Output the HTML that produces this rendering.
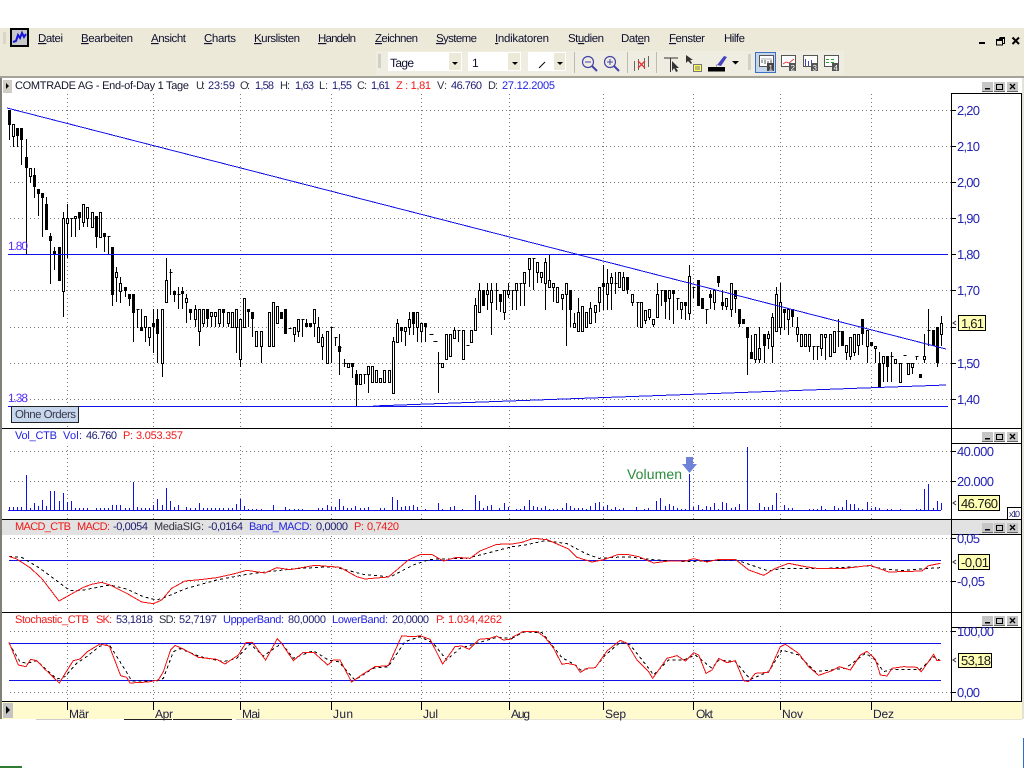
<!DOCTYPE html>
<html><head><meta charset="utf-8"><title>Chart</title>
<style>
html,body{margin:0;padding:0;background:#fff;width:1024px;height:768px;overflow:hidden}
svg{display:block}
text{font-family:"Liberation Sans",Arial,sans-serif;font-size:11px;text-rendering:geometricPrecision}
.m text{font-size:11.5px;fill:#101030}
.ax text{font-size:13px;fill:#2424b4}
.bx{fill:#ffffb4;stroke:#000}
.bt{font-size:13px;fill:#1a1a1a}
.n{fill:#1c1c70}.r{fill:#f01818}.b{fill:#2222e0}.d{fill:#303040}
.g line{stroke:#777;stroke-dasharray:1 3}
.e{shape-rendering:crispEdges}
.tl text{font-size:12px;fill:#202040}
</style></head><body>
<svg width="1024" height="768" viewBox="0 0 1024 768" xmlns="http://www.w3.org/2000/svg">
<rect width="1024" height="768" fill="#fff"/>
<rect y="28" width="1024" height="49" fill="#ece9d8"/>
<rect x="376" y="51" width="468" height="24" fill="#efede1"/>
<rect y="76" width="1024" height="2" fill="#a5a398"/>
<rect x="0" y="78" width="2" height="641" fill="#808078"/>
<rect x="1022" y="78" width="2" height="641" fill="#e4e2d8"/>
<!-- grip -->
<path d="M3 33h3M3 35h3M3 37h3M3 39h3M3 41h3M3 43h3" stroke="#c4c2b4" class="e"/>
<!-- app icon -->
<rect x="10" y="28" width="19" height="19" fill="#000"/>
<rect x="12" y="30" width="15" height="15" fill="#c8c8c8"/>
<path d="M13 42l3-1 2-6 2 3 2-5 2 4 2-3" fill="none" stroke="#1414e0" stroke-width="2"/>
<!-- menu -->
<g class="m">
<text x="38" y="42" textLength="25"><tspan text-decoration="underline">D</tspan>atei</text>
<text x="81" y="42" textLength="52"><tspan text-decoration="underline">B</tspan>earbeiten</text>
<text x="151" y="42" textLength="35"><tspan text-decoration="underline">A</tspan>nsicht</text>
<text x="204" y="42" textLength="32"><tspan text-decoration="underline">C</tspan>harts</text>
<text x="254" y="42" textLength="46"><tspan text-decoration="underline">K</tspan>urslisten</text>
<text x="318" y="42" textLength="38"><tspan text-decoration="underline">H</tspan>andeln</text>
<text x="375" y="42" textLength="43"><tspan text-decoration="underline">Z</tspan>eichnen</text>
<text x="436" y="42" textLength="41"><tspan text-decoration="underline">S</tspan>ysteme</text>
<text x="495" y="42" textLength="54"><tspan text-decoration="underline">I</tspan>ndikatoren</text>
<text x="568" y="42" textLength="36">St<tspan text-decoration="underline">u</tspan>dien</text>
<text x="621" y="42" textLength="29">Dat<tspan text-decoration="underline">e</tspan>n</text>
<text x="669" y="42" textLength="36"><tspan text-decoration="underline">F</tspan>enster</text>
<text x="724" y="42" textLength="21">Hilfe</text>
</g>
<!-- window buttons -->
<rect x="979" y="42" width="6" height="2" fill="#000" class="e"/>
<g class="e" fill="none" stroke="#000">
<path d="M999.500 37.500h5v6h-2"/><path d="M999 38.500h6" />
<rect x="996.500" y="39.500" width="6" height="5.500"/><path d="M996 40.500h7"/>
</g>
<path d="M1012.500 37.500l6.500 6.500M1019 37.500l-6.500 6.500" stroke="#000" stroke-width="2"/>
<!-- toolbar -->
<path d="M378 55h3M378 57h3M378 59h3M378 61h3M378 63h3M378 65h3M378 67h3" stroke="#b5b3a5" class="e"/>
<rect x="388" y="52" width="74" height="19" fill="#fff"/>
<rect x="449" y="53" width="12" height="17" fill="#ece9d8"/>
<path d="M452 62h6l-3 3z"/>
<text x="390" y="67" textLength="24" style="font-size:12px" fill="#101030">Tage</text>
<rect x="468" y="52" width="53" height="19" fill="#fff"/>
<rect x="508" y="53" width="12" height="17" fill="#ece9d8"/>
<path d="M512 62h6l-3 3z"/>
<text x="472" y="67" style="font-size:12px" fill="#101030">1</text>
<rect x="528" y="52" width="38" height="19" fill="#fff"/>
<rect x="554" y="53" width="11" height="17" fill="#ece9d8"/>
<path d="M557 62h6l-3 3z"/>
<path d="M539 68l6-6" stroke="#000"/>
<path d="M574.500 52v21M627.500 52v21M656.500 52v21" stroke="#bdbbae" class="e"/>
<circle cx="588" cy="62" r="5.500" fill="#efede1" stroke="#4444a8" stroke-width="1.200"/>
<path d="M592 66l5 5" stroke="#4444a8" stroke-width="2"/><path d="M585 62h6" stroke="#4444a8"/>
<circle cx="610" cy="62" r="5.500" fill="#efede1" stroke="#4444a8" stroke-width="1.200"/>
<path d="M614 66l5 5" stroke="#4444a8" stroke-width="2"/><path d="M607 62h6M610 59v6" stroke="#4444a8"/>
<path d="M634.500 61v10M638.500 59v11M644.500 58v11M648.500 56v11" stroke="#666" class="e"/>
<path d="M638 61l7 7M645 61l-7 7" stroke="#e83030" stroke-width="1.300"/>
<path d="M664 58h14M670.500 58v14" stroke="#333" class="e"/>
<path d="M672 61v10l2-3 2 4 2-1-2-3h3z" fill="#333"/>
<path d="M686 55v8l2-2 3 3 1-1-2-3h3z" fill="#333"/>
<rect x="693.500" y="64.500" width="8" height="7" fill="#ffff60" stroke="#777"/>
<path d="M695 67h5M695 69h5" stroke="#777" class="e"/>
<rect x="708" y="67" width="17" height="4.500" fill="#000"/>
<path d="M717 65l7-9 3 1-6 9z" fill="#4444c0"/><path d="M717 66l-1 1 1-3" fill="#333"/>
<path d="M732 61h7l-3.500 3.500z"/>
<path d="M748 55h3M748 57h3M748 59h3M748 61h3M748 63h3M748 65h3M748 67h3M748 69h3" stroke="#b5b3a5" class="e"/>
<rect x="755.500" y="52.500" width="20" height="20" fill="#c5d6ec" stroke="#3a6fc0"/>
<g>
<rect x="759.500" y="55.500" width="14" height="11" fill="#fff" stroke="#555" class="e"/><path d="M761 59h11" stroke="#aaa" class="e"/><path d="M762 60v3M765 60v4M768 61v3M771 60v3" stroke="#555"/><rect x="767" y="63" width="7" height="8" fill="#444"/><text x="768.500" y="70.500" style="font-size:8px" fill="#fff">1</text>
<rect x="781.500" y="55.500" width="14" height="11" fill="#fff" stroke="#555" class="e"/><path d="M783 64l3-2 3 1 5-4" fill="none" stroke="#e04040"/><rect x="789" y="63" width="7" height="8" fill="#555"/><text x="790.500" y="70.500" style="font-size:8px" fill="#fff">2</text>
<rect x="803.500" y="55.500" width="14" height="11" fill="#fff" stroke="#555" class="e"/><path d="M805.500 59v7M808.500 61v5M811.500 60v6" stroke="#4444b0" class="e"/><rect x="811" y="63" width="7" height="8" fill="#555"/><text x="812.500" y="70.500" style="font-size:8px" fill="#fff">3</text>
<rect x="824.500" y="55.500" width="14" height="11" fill="#fff" stroke="#555" class="e"/><path d="M826 59.500h3M831 59.500h3M826 62.500h3M831 62.500h3" stroke="#30a030" class="e"/><rect x="832" y="63" width="7" height="8" fill="#555"/><text x="833.500" y="70.500" style="font-size:8px" fill="#fff">4</text>
</g>

<!-- bands -->
<rect x="2" y="520" width="1020" height="15" fill="#e2e2e2"/>
<rect x="2" y="702" width="1020" height="17" fill="#fffbcf"/>
<path d="M36 719.500h34M236 719.500h17" stroke="#ccc" class="e"/>
<path d="M124 719.500h48M173 719.500h59" stroke="#222" class="e"/>
<rect y="719" x="254" width="768" height="1" fill="#e8e6da"/>

<!-- grids -->
<g class="g e">
<line x1="10" x2="951" y1="110.500" y2="110.500"/><line x1="10" x2="951" y1="146.500" y2="146.500"/><line x1="10" x2="951" y1="182.500" y2="182.500"/><line x1="10" x2="951" y1="218.500" y2="218.500"/><line x1="10" x2="951" y1="290.500" y2="290.500"/><line x1="10" x2="951" y1="327.500" y2="327.500"/><line x1="10" x2="951" y1="363.500" y2="363.500"/><line x1="10" x2="951" y1="399.500" y2="399.500"/>
<line x1="10" x2="951" y1="451.500" y2="451.500"/><line x1="10" x2="951" y1="481.500" y2="481.500"/>
<line x1="10" x2="951" y1="538.500" y2="538.500"/><line x1="10" x2="951" y1="581.500" y2="581.500"/>
<line x1="10" x2="951" y1="631.500" y2="631.500"/><line x1="10" x2="951" y1="692.500" y2="692.500"/>
</g>
<g class="e" fill="none" stroke="#777" stroke-dasharray="1 3">
<path d="M67.500 94V428M153.500 94V428M240.500 94V428M331.500 94V428M421.500 94V428M509.500 94V428M603.500 94V428M693.500 94V428M780.500 94V428M871.500 94V428"/>
<path d="M67.500 446V519M153.500 446V519M240.500 446V519M331.500 446V519M421.500 446V519M509.500 446V519M603.500 446V519M693.500 446V519M780.500 446V519M871.500 446V519"/>
<path d="M67.500 536V612M153.500 536V612M240.500 536V612M331.500 536V612M421.500 536V612M509.500 536V612M603.500 536V612M693.500 536V612M780.500 536V612M871.500 536V612"/>
<path d="M67.500 626V701M153.500 626V701M240.500 626V701M331.500 626V701M421.500 626V701M509.500 626V701M603.500 626V701M693.500 626V701M780.500 626V701M871.500 626V701"/>
</g>

<!-- candles -->
<g class="e" transform="translate(.5 0)">
<path fill="none" stroke="#000" d="M9 110V140M13 124V147M17 128V147M21 128V165M26 139V254M30 168V183M34 168V198M38 189V216M42 193V237M46 197V230M50 233V284M54 247V270M59 247V281M63 212V317M67 204V258M71 218V237M75 216V237M79 212V230M83 204V227M87 207V227M92 212V227M96 216V248M100 212V237M104 233V252M108 236V254M112 247V306M116 267V302M120 277V303M125 287V297M129 294V306M133 294V342M137 309V328M141 309V331M145 316V342M149 327V346M153 309V353M157 309V363M162 309V377M166 258V302M170 269V295M174 291V302M178 287V309M182 287V309M186 294V323M190 309V320M195 305V327M199 309V346M203 309V327M207 309V327M211 312V327M215 312V327M219 309V327M223 309V327M228 312V327M232 312V327M236 309V353M240 319V367M244 298V327M248 309V327M252 312V337M256 331V346M261 331V363M269 312V346M273 302V346M277 306V323M281 312V319M285 309V334M294 327V342M298 319V337M302 319V337M306 319V327M310 323V327M314 309V337M318 317V342M322 334V360M327 331V363M331 327V363M335 337V346M339 334V375
M344 359V367M348 363V367M352 363V378M356 370V407M360 374V384M364 374V384M368 366V393M372 366V382M376 370V382M380 378V382M384 370V382M389 370V382M393 337V393M397 319V342M401 327V342M405 327V346M409 312V335M413 312V335M417 312V342M421 323V342M425 323V342M438 352V393M442 363V367M446 334V359M450 334V356M454 327V338M458 330V342M463 330V359M471 330V342M475 298V330M479 283V312M483 290V306M487 283V310M491 283V335M496 283V310M500 294V312M504 290V320M508 283V298M512 290V310M516 283V310M520 283V306M524 272V306M529 258V287M533 258V290M537 262V283M541 272V283M545 258V310M549 254V287M553 283V302M557 287V302M562 294V310M566 283V346M570 290V327M574 313V327M578 298V331M582 306V331M586 312V327M590 302V323M595 305V323M599 287V312M603 265V310M607 269V310M611 273V310M615 272V294M619 272V287M623 272V290M627 277V294M632 294V306M637 302V327
M641 302V327M645 310V324M649 309V320M653 319V327M657 283V317M661 290V306M665 290V319M669 290V320M673 290V324M677 298V310M681 302V319M685 302V320M689 265V320M693 287V298M698 280V306M702 298V309M706 309V324M710 290V309M714 290V310M718 276V287M722 290V310M726 298V310M731 283V317M735 290V313M739 309V327M743 319V324M747 327V375M751 335V359M755 334V363M759 327V363M764 334V363M768 331V349M772 313V363M776 287V331M780 283V335M784 309V330M788 309V335M792 309V327M797 317V342M801 334V346M805 334V346M809 334V352M813 346V360M817 346V360M821 334V356M825 334V360M830 334V356M834 331V352M838 319V347M842 331V346M846 345V360M850 337V360M854 334V356M858 334V355M862 319V345M867 330V363M871 342V346M875 346V363M879 352V388M883 356V382M887 356V382M891 352V382M895 359V363M900 363V382M908 363V374M912 363V374M916 356V360M920 374V378M924 334V363M928 309V346M933 330V346M937 327V367M941 316V346"/>
<path fill="none" stroke="#000" d="M70 218.500h3M107 236.500h3M136 309.500h3M169 272.500h3M177 294.500h3M288 328.500h3M301 319.500h3M330 327.500h3M334 337.500h3M339 347.500h2M343 363.500h3M363 374.500h3M429 334.500h4M433 341.500h4M437 363.500h3M457 330.500h3M466 345.500h3M495 290.500h3M511 290.500h3M519 283.500h3M532 258.500h3M614 283.500h3M636 302.500h3M660 290.500h3M676 298.500h3M692 287.500h3M705 309.500h3M812 346.500h3M816 346.500h3M837 331.500h3M890 356.500h3M903 355.500h3M915 356.500h3M927 330.500h3"/>
<path fill="none" stroke="#000" stroke-width="3" d="M9 110V125M17 128V136M21 128V140M26 157V168M34 175V187M38 189V194M42 193V198M46 204V230M50 236V241M54 251V255M59 247V281M79 212V218M96 216V237M104 233V237M112 247V295M125 287V291M129 294V299M133 294V313M141 327V331M153 323V327M157 319V334M174 291V295M182 291V294M190 309V313M207 309V319M223 309V313M248 309V312M252 312V319M281 312V319M285 309V334M306 323V327M310 323V327M339 346V352M352 363V367M356 374V385M401 327V331M413 312V324M425 323V327M483 290V306M500 294V302M570 290V310M603 283V287M627 277V290M665 290V302M673 290V294M685 302V306M698 280V306M702 298V309M710 294V298M718 276V283M722 302V306M735 290V298M739 309V324M743 319V324M747 327V338M751 352V359M764 334V346M784 309V313M792 309V317M842 331V346M862 319V334M871 342V346M879 363V388M887 356V367M920 374V378M933 330V346M937 327V363"/>
</g>
<g class="e" transform="translate(.5 .5)" fill="#fff" stroke="#000">
<path d="M12 124h2V136h-2zM29 168h2V176h-2zM62 218h2V291h-2zM66 218h2V223h-2zM74 216h2V218h-2zM82 204h2V222h-2zM86 207h2V218h-2zM91 212h2V227h-2zM99 212h2V237h-2zM115 272h2V277h-2zM119 283h2V291h-2zM144 316h2V327h-2zM148 327h2V337h-2zM161 309h2V363h-2zM165 280h2V302h-2zM185 298h2V302h-2zM194 309h2V319h-2zM198 309h2V331h-2zM202 309h2V323h-2zM210 312h2V316h-2zM214 312h2V316h-2zM218 309h2V323h-2zM227 312h2V323h-2zM231 312h2V327h-2zM235 309h2V327h-2zM239 319h2V359h-2zM243 298h2V327h-2zM255 331h2V346h-2zM260 331h2V346h-2zM268 312h2V346h-2zM272 302h2V346h-2zM276 306h2V323h-2zM293 327h2V334h-2zM297 319h2V331h-2zM313 309h2V323h-2zM317 327h2V342h-2zM321 337h2V346h-2zM326 331h2V363h-2z"/>
<path d="M347 363h2V367h-2zM359 374h2V384h-2zM367 366h2V374h-2zM371 366h2V382h-2zM375 370h2V382h-2zM379 378h2V382h-2zM383 370h2V382h-2zM388 370h2V382h-2zM392 341h2V393h-2zM396 323h2V342h-2zM404 327h2V331h-2zM408 319h2V327h-2zM416 312h2V327h-2zM420 323h2V331h-2zM441 363h2V367h-2zM445 334h2V359h-2zM449 334h2V356h-2zM453 330h2V338h-2zM462 330h2V359h-2zM470 330h2V342h-2zM474 305h2V330h-2zM478 290h2V312h-2zM486 290h2V294h-2zM490 290h2V302h-2zM503 290h2V312h-2zM507 290h2V294h-2zM515 283h2V290h-2zM523 272h2V283h-2zM528 258h2V269h-2zM536 262h2V272h-2zM540 272h2V277h-2zM544 262h2V283h-2zM548 280h2V287h-2zM552 283h2V287h-2zM556 287h2V302h-2zM561 294h2V298h-2zM565 283h2V294h-2zM573 323h2V327h-2zM577 312h2V331h-2zM581 306h2V331h-2zM585 312h2V327h-2zM589 308h2V323h-2zM594 305h2V312h-2zM598 287h2V302h-2zM606 283h2V294h-2zM610 277h2V283h-2zM618 272h2V287h-2zM622 277h2V290h-2zM631 294h2V302h-2z"/>
<path d="M640 302h2V327h-2zM644 310h2V320h-2zM648 309h2V317h-2zM652 319h2V324h-2zM656 294h2V317h-2zM668 290h2V298h-2zM680 302h2V309h-2zM688 276h2V313h-2zM713 290h2V302h-2zM725 298h2V306h-2zM730 283h2V309h-2zM734 296h2V298h-2zM754 334h2V359h-2zM758 348h2V359h-2zM767 334h2V338h-2zM771 317h2V346h-2zM775 294h2V331h-2zM779 302h2V327h-2zM787 309h2V319h-2zM796 327h2V334h-2zM800 334h2V346h-2zM804 334h2V346h-2zM808 334h2V346h-2zM820 334h2V348h-2zM824 334h2V337h-2zM829 334h2V356h-2zM833 331h2V352h-2zM845 345h2V352h-2zM849 337h2V356h-2zM853 334h2V352h-2zM857 334h2V345h-2zM866 330h2V346h-2zM874 346h2V348h-2zM882 356h2V363h-2zM894 359h2V363h-2zM899 363h2V382h-2zM907 363h2V374h-2zM911 363h2V367h-2zM923 356h2V359h-2zM940 323h2V334h-2z"/>
</g>

<!-- main lines -->
<g class="e" fill="none" stroke="#1010e8">
<path d="M7 108L946 349"/>
<path d="M8 254.500H948"/>
<path d="M8 406.500H948"/>
<path d="M373 406L946 385"/>
</g>
<text x="8" y="250" textLength="20" style="font-size:12px" fill="#5a30ff">1.80</text>
<text x="8" y="402" textLength="20" style="font-size:12px" fill="#5a30ff">1.38</text>
<rect x="11.500" y="406.500" width="67" height="16" fill="#c6d7ee" stroke="#222"/>
<text x="15" y="418" textLength="61" style="font-size:11.500px" fill="#3a3a48">Ohne Orders</text>

<!-- volume -->
<path class="e" stroke="#1010e8" fill="none" d="M8 510.500H941M9.500 510V507M13.500 510V507M17.500 510V507M21.500 510V507M26.500 510V475M30.500 510V508M34.500 510V503M38.500 510V506M42.500 510V500M46.500 510V506M50.500 510V491M54.500 510V491M59.500 510V501M63.500 510V493M67.500 510V502M71.500 510V501M75.500 510V508M79.500 510V508M83.500 510V508M87.500 510V508M96.500 510V508M100.500 510V508M104.500 510V508M108.500 510V508M112.500 510V505M116.500 510V505M120.500 510V505M125.500 510V508M129.500 510V508M133.500 510V482M137.500 510V507M141.500 510V508M145.500 510V508M149.500 510V508M153.500 510V505M157.500 510V499M162.500 510V505M166.500 510V488M170.500 510V501M174.500 510V507M178.500 510V505M186.500 510V507M190.500 510V508M195.500 510V508M199.500 510V503M203.500 510V508M207.500 510V508M211.500 510V508M215.500 510V508M219.500 510V508M223.500 510V508M228.500 510V508M232.500 510V508M236.500 510V504M240.500 510V499M244.500 510V506M248.500 510V509M252.500 510V509M256.500 510V509M261.500 510V509M273.500 510V505M285.500 510V507M289.500 510V509M294.500 510V509M298.500 510V509M302.500 510V509M318.500 510V508M322.500 510V508M327.500 510V505M331.500 510V507M335.500 510V507M339.500 510V499M343.500 510V506M347.500 510V508M351.500 510V508M355.500 510V506M360.500 510V508M364.500 510V508M368.500 510V507M380.500 510V508M384.500 510V508M392.500 510V497M397.500 510V500M401.500 510V507M405.500 510V506M409.500 510V506M413.500 510V505M417.500 510V507M425.500 510V509M438.500 510V503M442.500 510V509M450.500 510V507M454.500 510V506M462.500 510V509M475.500 510V495M479.500 510V501M483.500 510V508M487.500 510V506M491.500 510V505M499.500 510V508M504.500 510V503M508.500 510V507
M516.500 510V509M520.500 510V509M524.500 510V506M529.500 510V500M533.500 510V506M537.500 510V507M541.500 510V508M545.500 510V506M549.500 510V509M553.500 510V509M557.500 510V509M562.500 510V508M566.500 510V503M570.500 510V506M574.500 510V508M578.500 510V508M582.500 510V508M586.500 510V509M590.500 510V506M595.500 510V503M599.500 510V502M603.500 510V507M607.500 510V505M611.500 510V509M615.500 510V507M619.500 510V509M623.500 510V508M636.500 510V507M644.500 510V509M648.500 510V508M656.500 510V501M660.500 510V498M665.500 510V506M669.500 510V504M673.500 510V506M677.500 510V508M681.500 510V509M685.500 510V509M689.500 510V474M693.500 510V507M698.500 510V505M702.500 510V509M706.500 510V506M710.500 510V507M714.500 510V503M718.500 510V509M722.500 510V502M726.500 510V503M731.500 510V508M735.500 510V507M739.500 510V504M747.500 510V447M759.500 510V503M764.500 510V507M768.500 510V507M772.500 510V505M776.500 510V493M784.500 510V505M788.500 510V508M792.500 510V508M809.500 510V509M813.500 510V509M817.500 510V509M821.500 510V506M825.500 510V509M834.500 510V506M838.500 510V508M842.500 510V507M846.500 510V500M850.500 510V504M854.500 510V504M858.500 510V508M862.500 510V509M867.500 510V502M871.500 510V508M875.500 510V507M879.500 510V508M887.500 510V509M891.500 510V509M900.500 510V509M916.500 510V509M920.500 510V509M924.500 510V489M928.500 510V484M933.500 510V508M937.500 510V501M941.500 510V503"/>
<text x="627" y="479" textLength="55" style="font-size:14px" fill="#2a8a3a">Volumen</text>
<path d="M686 457h7v7h4l-7.500 9-7.500-9h4z" fill="#6e82d8"/>

<!-- MACD -->
<path class="e" d="M9 560.500H941" stroke="#1010e8" fill="none"/>
<g transform="translate(0 425) scale(.33333)" fill="none" class="e">
<path vector-effect="non-scaling-stroke" stroke="#000" stroke-dasharray="3 3" d="M27 394L65 397 120 430 210 497 240 497 330 480 380 492 430 515 470 525 500 515 560 490 650 465 740 448 830 437 900 430 1000 425 1090 448 1170 456 1240 420 1290 403 1400 400 1460 385 1536 365"/>
<path vector-effect="non-scaling-stroke" stroke="#f01010" d="M27 394L50 402 90 428 125 460 177 528 250 487 275 478 305 472 330 480 380 505 425 531 460 536 485 525 515 490 555 468 600 464 650 458 700 447 740 436 795 444 830 428 870 434 945 421 1020 427 1070 455 1095 462 1165 456 1190 435 1225 405 1262 388 1295 388 1330 408 1370 397 1410 400 1440 378 1490 358 1536 357"/>
</g>
<g transform="translate(512 425) scale(.33333)" fill="none" class="e">
<path vector-effect="non-scaling-stroke" stroke="#000" stroke-dasharray="3 3" d="M0 365L40 360 100 347 165 356 220 385 260 400 345 395 420 404 520 410 670 404 770 438 810 430 920 431 1075 423 1110 431 1170 437 1240 431 1285 428"/>
<path vector-effect="non-scaling-stroke" stroke="#f01010" d="M0 357L30 352 65 340 105 344 170 372 195 397 240 411 275 404 320 388 345 388 380 395 425 414 470 408 520 408 545 401 585 411 620 403 670 403 710 435 755 451 790 430 830 415 880 425 920 431 1000 430 1075 421 1130 441 1230 438 1250 422 1285 415"/>
</g>

<!-- Stochastic -->
<path class="e" d="M9 643.500H941M9 680.500H941" stroke="#1010e8" fill="none"/>
<g transform="translate(0 610) scale(.33333)" fill="none" class="e">
<path vector-effect="non-scaling-stroke" stroke="#000" stroke-dasharray="3 3" d="M27 100L60 155 80 160 110 152 170 207 195 200 230 160 260 140 300 108 328 104 385 195 395 213 470 213 490 205 520 125 540 116 600 140 670 155 710 145 750 102 790 138 845 100 880 145 940 122 985 150 1015 155 1065 210 1120 175 1165 170 1215 95 1260 80 1300 100 1340 150 1380 115 1430 100 1490 82 1536 85"/>
<path vector-effect="non-scaling-stroke" stroke="#f01010" d="M27 97L55 165 78 170 92 148 110 152 135 178 178 219 205 175 220 152 240 147 262 125 300 102 328 108 362 197 380 202 390 219 445 216 475 210 490 185 512 120 525 106 550 117 595 142 650 148 675 162 715 135 738 98 757 97 797 150 832 86 845 100 880 152 910 127 942 128 983 165 1000 150 1020 150 1055 216 1085 195 1125 170 1165 167 1205 78 1245 80 1260 77 1290 88 1328 162 1365 110 1385 108 1408 118 1438 88 1470 85 1490 78 1510 90 1536 87"/>
</g>
<g transform="translate(512 610) scale(.33333)" fill="none" class="e">
<path vector-effect="non-scaling-stroke" stroke="#000" stroke-dasharray="3 3" d="M0 85L35 66 90 68 120 105 150 143 190 165 205 180 250 172 280 135 325 97 355 105 410 175 425 195 470 150 515 150 550 135 600 175 620 150 670 155 715 208 770 185 810 120 860 135 910 185 1000 175 1060 130 1085 145 1115 185 1140 178 1225 178 1265 140 1285 152"/>
<path vector-effect="non-scaling-stroke" stroke="#f01010" d="M0 82L35 64 75 64 100 83 125 115 150 163 165 160 190 165 205 187 225 175 250 173 285 123 325 91 345 100 375 150 410 185 422 205 465 145 495 137 520 153 545 128 560 135 582 190 600 180 620 145 645 158 670 152 695 212 710 215 730 190 770 187 805 110 820 103 860 130 890 170 920 196 960 182 982 170 1015 180 1045 135 1065 124 1090 148 1105 195 1125 198 1140 175 1175 170 1215 172 1228 185 1265 133 1275 152 1285 151"/>
</g>

<!-- separators and axis boxes -->
<g class="e" stroke="#000" fill="none">
<path d="M2 428.500H1022M2 519.500H1022M2 612.500H1022M2 701.500H1022"/>
<path d="M951.500 93V701M1021.500 93V701M951 93.500H1022M951 443.500H1022M951 534.500H1022M951 627.500H1022"/>
<path d="M951 110.500h5M951 146.500h5M951 182.500h5M951 218.500h5M951 254.500h5M951 290.500h5M951 327.500h5M951 363.500h5M951 399.500h5M951 451.500h5M951 481.500h5M951 538.500h5M951 581.500h5M951 631.500h5M951 692.500h5"/>
</g>
<g class="ax">
<text x="957" y="115" textLength="23">2,20</text><text x="957" y="151" textLength="23">2,10</text><text x="957" y="187" textLength="23">2,00</text><text x="957" y="223" textLength="23">1,90</text><text x="957" y="259" textLength="23">1,80</text><text x="957" y="295" textLength="23">1,70</text><text x="957" y="368" textLength="23">1,50</text><text x="957" y="404" textLength="23">1,40</text>
<text x="957" y="456" textLength="37">40.000</text><text x="957" y="486" textLength="37">20.000</text>
<text x="957" y="543" textLength="23">0,05</text><text x="957" y="586" textLength="28">-0,05</text>
<text x="957" y="636" textLength="37">100,00</text><text x="957" y="697" textLength="23">0,00</text>
</g>
<g class="e">
<rect class="bx" x="958.500" y="315.500" width="27" height="15"/>
<rect class="bx" x="958.500" y="495.500" width="41" height="15"/>
<rect class="bx" x="958.500" y="554.500" width="31" height="15"/>
<rect class="bx" x="958.500" y="653.500" width="33" height="14"/>
<rect x="1007.500" y="507.500" width="14" height="12" fill="#fff" stroke="#000"/>
</g>
<text class="bt" x="961" y="328" textLength="23">1,61</text>
<text class="bt" x="961" y="508" textLength="37">46.760</text>
<text class="bt" x="961" y="567" textLength="28">-0,01</text>
<text class="bt" x="961" y="665" textLength="30">53,18</text>
<text x="1009" y="517" textLength="11" style="font-size:9px" fill="#1c1c70">x10</text>
<path d="M956 321l-3 2 3 2M956 501l-3 2 3 2M956 560l-3 2 3 2M956 658l-3 2 3 2" fill="none" stroke="#333"/>

<!-- titles -->
<rect x="3" y="80" width="9" height="13" fill="#d0cec4"/><path d="M6 83v6l3-3z"/>
<text x="15" y="89" textLength="174" fill="#14142c">COMTRADE AG - End-of-Day 1 Tage</text>
<text x="196" y="89" textLength="9" class="d">U:</text><text x="208" y="89" textLength="27" class="n">23:59</text>
<text x="240" y="89" textLength="10" class="d">O:</text><text x="255" y="89" textLength="19" class="n">1,58</text>
<text x="280" y="89" textLength="10" class="d">H:</text><text x="295" y="89" textLength="19" class="n">1,63</text>
<text x="319" y="89" textLength="9" class="d">L:</text><text x="332" y="89" textLength="20" class="n">1,55</text>
<text x="357" y="89" textLength="10" class="d">C:</text><text x="371" y="89" textLength="19" class="n">1,61</text>
<text x="396" y="89" textLength="35" class="r">Z : 1,81</text>
<text x="437" y="89" textLength="10" class="d">V:</text><text x="451" y="89" textLength="31" class="n">46.760</text>
<text x="488" y="89" textLength="10" class="d">D:</text><text x="502" y="89" textLength="53" class="b">27.12.2005</text>

<text x="15" y="439" textLength="42" class="b">Vol_CTB</text><text x="63" y="439" textLength="19" class="b">Vol:</text><text x="86" y="439" textLength="31" class="n">46.760</text><text x="123" y="439" textLength="10" class="r">P:</text><text x="136" y="439" textLength="47" class="r">3.053.357</text>

<text x="15" y="530" textLength="56" class="r">MACD_CTB</text><text x="77" y="530" textLength="33" class="r">MACD:</text><text x="113" y="530" textLength="35" class="n">-0,0054</text><text x="154" y="530" textLength="50" class="d">MediaSIG:</text><text x="208" y="530" textLength="35" class="n">-0,0164</text><text x="249" y="530" textLength="63" class="b">Band_MACD:</text><text x="316" y="530" textLength="32" class="n">0,0000</text><text x="354" y="530" textLength="10" class="r">P:</text><text x="367" y="530" textLength="32" class="r">0,7420</text>

<text x="15" y="623" textLength="74" class="r">Stochastic_CTB</text><text x="96" y="623" textLength="16" class="r">SK:</text><text x="116" y="623" textLength="37" class="n">53,1818</text><text x="159" y="623" textLength="17" class="d">SD:</text><text x="179" y="623" textLength="38" class="n">52,7197</text><text x="223" y="623" textLength="61" class="b">UppperBand:</text><text x="288" y="623" textLength="38" class="n">80,0000</text><text x="332" y="623" textLength="56" class="b">LowerBand:</text><text x="392" y="623" textLength="37" class="n">20,0000</text><text x="436" y="623" textLength="9" class="r">P:</text><text x="448" y="623" textLength="54" class="r">1.034,4262</text>

<!-- pane buttons -->
<g class="e">
<path d="M982 82h11v9h-11zM994 82h11v9h-11zM1007 82h11v9h-11zM982 432h11v9h-11zM994 432h11v9h-11zM1007 432h11v9h-11zM982 523h11v9h-11zM994 523h11v9h-11zM1007 523h11v9h-11zM982 616h11v9h-11zM994 616h11v9h-11zM1007 616h11v9h-11z" fill="#c6c6c6"/>
<path d="M982 91.500h11M994 91.500h11M1007 91.500h11M982 441.500h11M994 441.500h11M1007 441.500h11M982 532.500h11M994 532.500h11M1007 532.500h11M982 625.500h11M994 625.500h11M1007 625.500h11" stroke="#666"/>
<path d="M985 88h5v1.500h-5zM985 438h5v1.500h-5zM985 529h5v1.500h-5zM985 622h5v1.500h-5z" fill="#000"/>
<path d="M996.500 84.500h6v5h-6zM996.500 434.500h6v5h-6zM996.500 525.500h6v5h-6zM996.500 618.500h6v5h-6z" fill="none" stroke="#000"/>
</g>
<path d="M1010 84l5 5M1015 84l-5 5M1010 434l5 5M1015 434l-5 5M1010 525l5 5M1015 525l-5 5M1010 618l5 5M1015 618l-5 5" stroke="#000" stroke-width="1.300"/>

<!-- time axis -->
<path class="e" stroke="#000" d="M67.500 702v8M153.500 702v8M240.500 702v8M331.500 702v8M421.500 702v8M509.500 702v8M603.500 702v8M693.500 702v8M780.500 702v8M871.500 702v8"/>
<rect x="3" y="703" width="10" height="15" fill="#c4c4c4"/><path d="M6 706v8l4-4z"/>
<g class="tl">
<text x="69" y="718" textLength="20">Mär</text><text x="155" y="718" textLength="18">Apr</text><text x="242" y="718" textLength="18">Mai</text><text x="333" y="718" textLength="20">Jun</text><text x="423" y="718" textLength="15">Jul</text><text x="511" y="718" textLength="19">Aug</text><text x="605" y="718" textLength="21">Sep</text><text x="696" y="718" textLength="17">Okt</text><text x="782" y="718" textLength="21">Nov</text><text x="873" y="718" textLength="21">Dez</text>
</g>
<rect x="0" y="766" width="22" height="2" fill="#2f7d32"/>
<rect x="1023" y="738" width="1" height="30" fill="#2a6ed8"/>
</svg>
</body></html>
